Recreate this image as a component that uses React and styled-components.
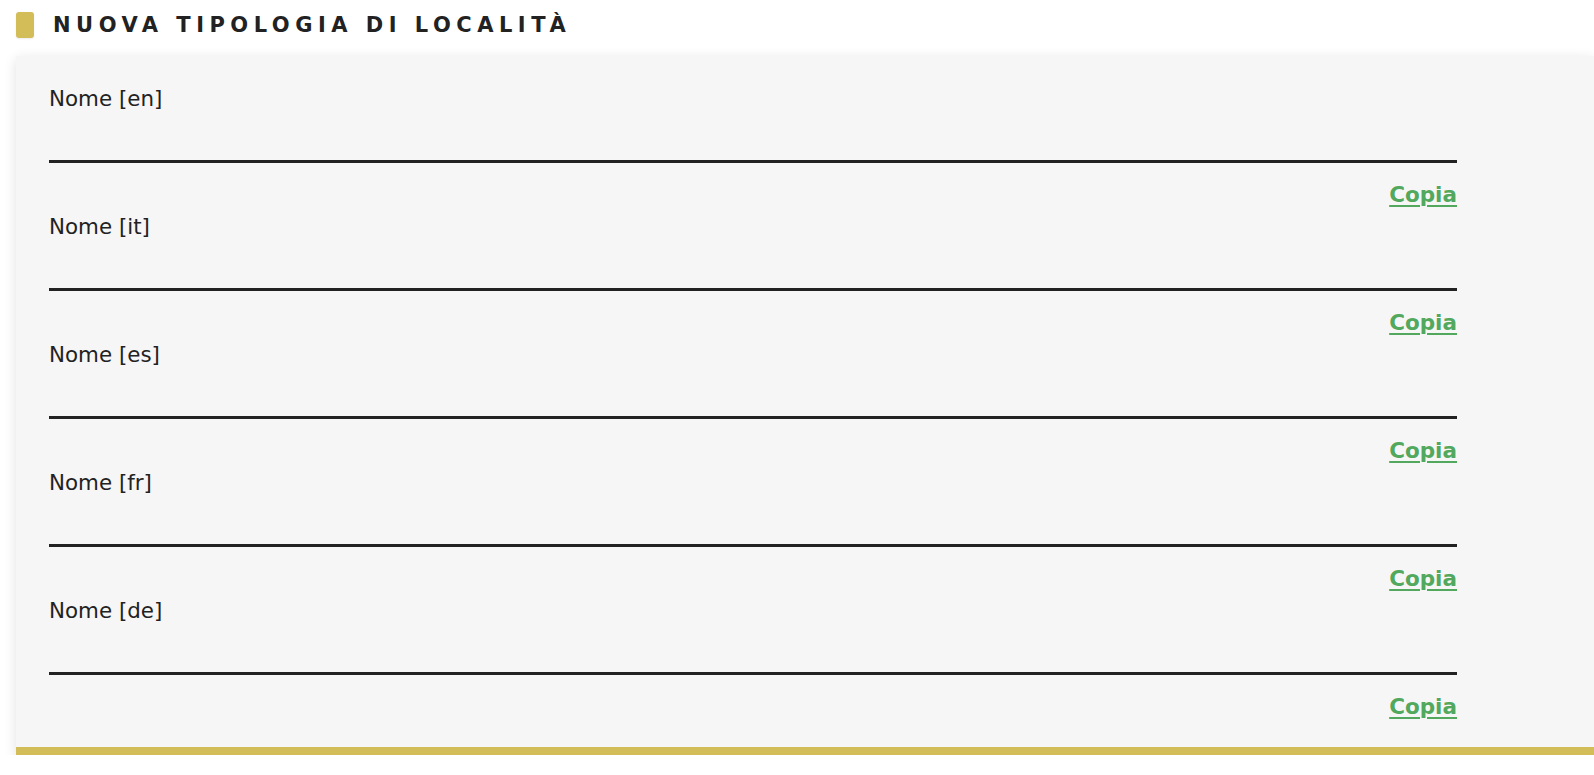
import React from "react";
import styled, { createGlobalStyle } from "styled-components";

const languages = ["en", "it", "es", "fr", "de"];

const App = () => {
  return (
    <>
      <GlobalStyle />
      <Page>
        <Header>
          <Marker />
          <Title>Nuova tipologia di località</Title>
        </Header>
        <Panel>
          {languages.map((lang) => (
            <Field key={lang}>
              <Label htmlFor={`nome-${lang}`}>Nome [{lang}]</Label>
              <Input id={`nome-${lang}`} type="text" />
              <Actions>
                <CopyLink href="#" onClick={(e) => e.preventDefault()}>
                  Copia
                </CopyLink>
              </Actions>
            </Field>
          ))}
        </Panel>
      </Page>
    </>
  );
};

export default App;

const GlobalStyle = createGlobalStyle`
  body {
    margin: 0;
    background: #ffffff;
    overflow: hidden;
    font-family: "DejaVu Sans", "Open Sans", sans-serif;
    color: #222222;
  }
`;

const Page = styled.div`
  padding: 12px 0 0 16px;
`;

const Header = styled.div`
  display: flex;
  align-items: center;
  gap: 19px;
  height: 26px;
`;

const Marker = styled.span`
  width: 18px;
  height: 26px;
  border-radius: 3px;
  background: #d2bd58;
  box-shadow: 0 1px 2px rgba(0, 0, 0, 0.08);
`;

const Title = styled.h1`
  margin: 0;
  font-size: 21px;
  line-height: 26px;
  font-weight: 700;
  text-transform: uppercase;
  letter-spacing: 5.5px;
  color: #222222;
`;

const Panel = styled.div`
  margin-top: 18px;
  padding: 31px 0 27px 33px;
  background: #f6f6f6;
  border-bottom: 8px solid #d2bd58;
  box-shadow: 0 3px 12px rgba(0, 0, 0, 0.12);
`;

const Field = styled.div`
  width: 1408px;
  display: flex;
  flex-direction: column;

  & + & {
    margin-top: 7px;
  }
`;

const Label = styled.label`
  font-size: 21.4px;
  line-height: 24px;
  color: #222222;
`;

const Input = styled.input`
  height: 49px;
  padding: 0;
  border: none;
  border-bottom: 3px solid #222222;
  background: transparent;
  outline: none;
  font-family: inherit;
  font-size: 21px;
  box-sizing: content-box;
`;

const Actions = styled.div`
  display: flex;
  justify-content: flex-end;
  margin-top: 19px;
`;

const CopyLink = styled.a`
  font-size: 21.5px;
  line-height: 26px;
  font-weight: 700;
  color: #52a85c;
  text-decoration: underline;
  text-decoration-thickness: 2px;
  text-underline-offset: 3px;
`;
